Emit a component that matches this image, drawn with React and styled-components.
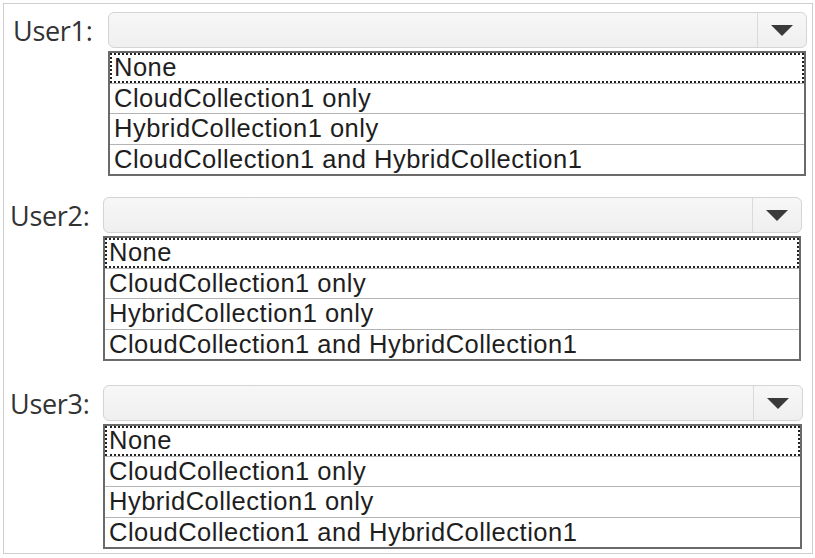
import React from "react";
import styled, { createGlobalStyle } from "styled-components";

const OPTIONS = [
  "None",
  "CloudCollection1 only",
  "HybridCollection1 only",
  "CloudCollection1 and HybridCollection1"
];

const USERS = [
  { name: "User1", left: 9, right: 5, top: 8, labelWidth: 95 },
  { name: "User2", left: 6, right: 10, top: 21, labelWidth: 93 },
  { name: "User3", left: 6, right: 9, top: 24, labelWidth: 93 }
];

const GlobalStyle = createGlobalStyle`
  html, body {
    margin: 0;
    padding: 0;
    background: #ffffff;
  }
`;

const Frame = styled.div`
  box-sizing: border-box;
  margin: 3px 0 0 3px;
  width: 810px;
  height: 551px;
  border: 1px solid #cfcfcf;
  display: flex;
  flex-direction: column;
`;

const Group = styled.div`
  display: grid;
  grid-template-columns: ${p => p.labelWidth}px 1fr;
  align-items: start;
  margin-top: ${p => p.top}px;
  padding-left: ${p => p.left}px;
  padding-right: ${p => p.right}px;
`;

const Label = styled.div`
  height: 36px;
  display: flex;
  align-items: center;
  font-family: "Open Sans", "Noto Sans", sans-serif;
  font-size: 27px;
  color: #333333;
  letter-spacing: -0.3px;
`;

const Column = styled.div`
  display: flex;
  flex-direction: column;
  gap: 3px;
`;

const Select = styled.div`
  box-sizing: border-box;
  height: 36px;
  display: flex;
  border: 1px solid #d4d4d4;
  border-radius: 6px;
  background: linear-gradient(#f7f7f7, #efefef);
`;

const SelectValue = styled.div`
  flex: 1;
`;

const ArrowButton = styled.div`
  width: 48px;
  display: flex;
  align-items: center;
  justify-content: center;
  border-left: 1px solid #dadada;
`;

const ListBox = styled.div`
  box-sizing: border-box;
  height: 125px;
  display: flex;
  flex-direction: column;
  border: 2px solid #6a6a6a;
  margin-right: 1px;
  background: #ffffff;
`;

const Option = styled.div`
  box-sizing: border-box;
  flex: 1;
  display: flex;
  align-items: center;
  padding-left: 4px;
  font-family: "Liberation Sans", Arial, sans-serif;
  font-size: 25.5px;
  letter-spacing: 0.5px;
  color: #1e1e1e;
  white-space: nowrap;
  border-top: ${p => (p.first ? "none" : "1px solid #b4b4b4")};
  outline: ${p => (p.focused ? "2px dotted #222" : "none")};
  outline-offset: -2px;
`;

const Arrow = () => (
  <svg width="22" height="11" viewBox="0 0 22 11">
    <path d="M0 0 H22 L11 11 Z" fill="#3a3a3a" />
  </svg>
);

const UserRow = ({ user }) => (
  <Group
    top={user.top}
    left={user.left}
    right={user.right}
    labelWidth={user.labelWidth}
  >
    <Label>{user.name}:</Label>
    <Column>
      <Select>
        <SelectValue />
        <ArrowButton>
          <Arrow />
        </ArrowButton>
      </Select>
      <ListBox>
        {OPTIONS.map((opt, i) => (
          <Option key={opt} first={i === 0} focused={i === 0}>
            {opt}
          </Option>
        ))}
      </ListBox>
    </Column>
  </Group>
);

export default function App() {
  return (
    <>
      <GlobalStyle />
      <Frame>
        {USERS.map(u => (
          <UserRow key={u.name} user={u} />
        ))}
      </Frame>
    </>
  );
}
